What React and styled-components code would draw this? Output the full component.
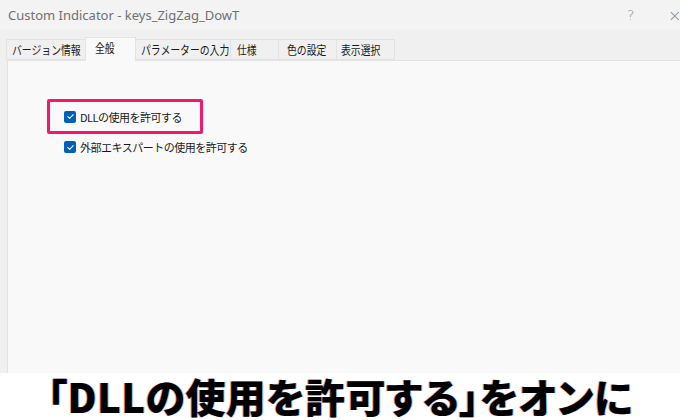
import React from 'react';
import styled, { createGlobalStyle } from 'styled-components';

const Global = createGlobalStyle`
  html, body { margin: 0; padding: 0; background: #ffffff; }
  body {
    width: 680px;
    height: 420px;
    overflow: hidden;
    font-family: "Noto Sans CJK JP", "Noto Sans", sans-serif;
  }
`;

const Frame = styled.div`
  width: 680px;
  height: 420px;
  display: flex;
  flex-direction: column;
  background: #ffffff;
  overflow: hidden;
`;

const Window = styled.div`
  height: 373px;
  flex-shrink: 0;
  display: flex;
  flex-direction: column;
  background: #f0f0f0;
`;

const TitleBar = styled.div`
  height: 30px;
  display: flex;
  align-items: center;
  background: #f3f3f3;
  padding-left: 8px;
  color: #707070;
  font-family: "Segoe UI", "Noto Sans", "Noto Sans CJK JP", sans-serif;
  font-size: 13px;
  overflow: hidden;
`;

const Title = styled.span`
  flex: 1;
  margin-top: -1px;
`;

const TitleBtn = styled.span`
  flex-shrink: 0;
  width: ${p => p.$w}px;
  color: #8a8a8a;
  font-size: ${p => p.$size}px;
  font-family: "DejaVu Sans", sans-serif;
  font-weight: 300;
`;

const Body = styled.div`
  flex: 1;
  display: flex;
  flex-direction: column;
  padding: 8px 0 0 7px;
`;

const Tabs = styled.div`
  display: flex;
  align-items: flex-end;
  height: 22px;
  position: relative;
  z-index: 1;
`;

const Tab = styled.div`
  width: ${p => p.$w}px;
  flex-shrink: 0;
  height: ${p => (p.$active ? 24 : 21)}px;
  margin-bottom: ${p => (p.$active ? -1 : 0)}px;
  padding: ${p => (p.$active ? 2 : 0)}px 0 0 ${p => p.$pad}px;
  box-sizing: border-box;
  display: flex;
  align-items: ${p => (p.$active ? 'flex-start' : 'center')};
  background: ${p => (p.$active ? '#f9f9f9' : '#f0f0f0')};
  border: 1px solid #e3e3e3;
  border-bottom: ${p => (p.$active ? 'none' : '1px solid #e3e3e3')};
  margin-left: -1px;
  overflow: hidden;
  white-space: nowrap;
`;

const TabLabel = styled.span`
  display: inline-block;
  font-size: 12px;
  line-height: 16px;
  color: #1a1a1a;
  transform: scaleX(0.82);
  transform-origin: left center;
`;

const Panel = styled.div`
  flex: 1;
  background: #f9f9f9;
  border-top: 1px solid #e3e3e3;
  border-left: 1px solid #e3e3e3;
  padding: 38px 0 0 39px;
  display: flex;
  flex-direction: column;
  gap: 3px;
`;

const Highlight = styled.div`
  width: 156px;
  height: 35px;
  box-sizing: border-box;
  border: 3px solid #f3186c;
  border-radius: 2px;
  display: flex;
  align-items: center;
  padding-left: 14px;
`;

const Option = styled.label`
  display: flex;
  align-items: center;
  gap: 4px;
  font-size: 11px;
  letter-spacing: -0.5px;
  color: #1a1a1a;
  padding-left: ${p => p.$indent || 0}px;
  height: 20px;
`;

const Box = styled.span`
  width: 12px;
  height: 12px;
  flex-shrink: 0;
  border-radius: 2px;
  background: #005fb8;
  display: inline-flex;
  align-items: center;
  justify-content: center;
`;

const Caption = styled.div`
  flex: 1;
  display: flex;
  align-items: flex-start;
  justify-content: center;
  padding-top: 1px;
  font-family: "Noto Sans CJK JP", sans-serif;
  font-weight: 900;
  font-size: 40px;
  line-height: 44px;
  letter-spacing: 0.4px;
  color: #000;
  font-feature-settings: "palt";
  white-space: nowrap;
  text-shadow: -1px 0 0 rgba(200, 0, 0, 0.35), 1px 0 0 rgba(0, 80, 200, 0.3);
`;

const Check = () => (
  <Box>
    <svg width="9" height="9" viewBox="0 0 10 10">
      <path d="M2 5.2 L4.1 7.2 L8 3" stroke="#fff" strokeWidth="1.2" fill="none" strokeLinecap="round" strokeLinejoin="round" />
    </svg>
  </Box>
);

const tabs = [
  { label: 'バージョン情報', w: 80, pad: 5 },
  { label: '全般', w: 51, pad: 9, active: true },
  { label: 'パラメーターの入力', w: 96, pad: 5 },
  { label: '仕様', w: 49, pad: 6 },
  { label: '色の設定', w: 59, pad: 8 },
  { label: '表示選択', w: 59, pad: 4 },
];

export default function App() {
  return (
    <Frame>
      <Global />
      <Window>
        <TitleBar>
          <Title>Custom Indicator - keys_ZigZag_DowT</Title>
          <TitleBtn $w={41} $size={14}>?</TitleBtn>
          <TitleBtn $w={12} $size={16}>×</TitleBtn>
        </TitleBar>
        <Body>
          <Tabs>
            {tabs.map(t => (
              <Tab key={t.label} $active={t.active} $pad={t.pad} $w={t.w}>
                <TabLabel>{t.label}</TabLabel>
              </Tab>
            ))}
          </Tabs>
          <Panel>
            <Highlight>
              <Option>
                <Check />
                DLLの使用を許可する
              </Option>
            </Highlight>
            <Option $indent={17}>
              <Check />
              外部エキスパートの使用を許可する
            </Option>
          </Panel>
        </Body>
      </Window>
      <Caption>「DLLの使用を許可する」をオンに</Caption>
    </Frame>
  );
}
